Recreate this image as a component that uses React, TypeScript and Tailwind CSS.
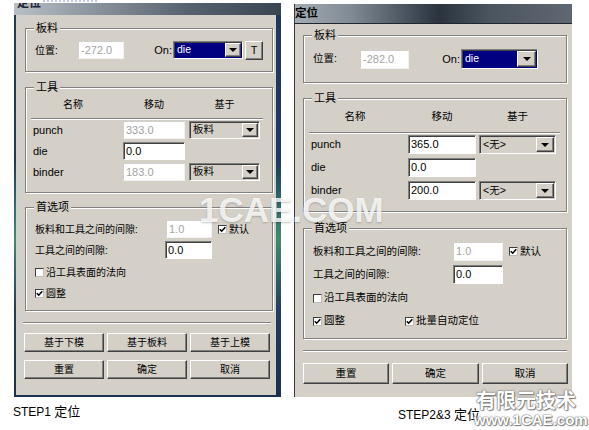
import clsx from 'clsx';
import type { ReactNode } from 'react';

const RAISED =
  'border border-t-white border-l-white border-b-[#404040] border-r-[#404040] shadow-[inset_-1px_-1px_0_#808080]';
const SUNKEN =
  'border border-t-[#808080] border-l-[#808080] border-b-white border-r-white shadow-[inset_1px_1px_0_#404040]';

function Group({ title, className, children }: { title: string; className?: string; children: ReactNode }) {
  return (
    <div className={clsx('relative border border-[#808080] shadow-[inset_1px_1px_0_#fff,1px_1px_0_#fff]', className)}>
      <span className="absolute -top-[7px] left-[8px] bg-[#d4d0c8] px-[2px] text-[11px] leading-[12px]">{title}</span>
      {children}
    </div>
  );
}

function Field({ value, disabled, className }: { value: string; disabled?: boolean; className?: string }) {
  return (
    <div
      className={clsx(
        'flex items-center bg-white pl-[2px] text-[11px] leading-none',
        disabled
          ? 'border border-[#cfcfcf] border-b-[#f2f2f2] border-r-[#f2f2f2] text-[#a3a3a3]'
          : clsx(SUNKEN, 'text-black'),
        className,
      )}
    >
      {value}
    </div>
  );
}

function Sel({ value, dark, className, arrow = 'w-[16px]' }: { value: string; dark?: boolean; className?: string; arrow?: string }) {
  return (
    <div className={clsx('flex items-stretch p-[1px]', SUNKEN, dark ? 'bg-[#000080]' : 'bg-[#d4d0c8]', className)}>
      <div className={clsx('flex flex-1 items-center pl-[2px] text-[10.5px]', dark ? 'text-white' : 'text-black')}>{value}</div>
      <div className={clsx('flex items-center justify-center bg-[#d4d0c8]', RAISED, arrow)}>
        <svg width="8" height="4" viewBox="0 0 8 4">
          <path d="M0 0H8L4 4Z" fill="#000" />
        </svg>
      </div>
    </div>
  );
}

function Btn({ children, className }: { children: ReactNode; className?: string }) {
  return <div className={clsx('flex items-center justify-center bg-[#d4d0c8] text-black', RAISED, className)}>{children}</div>;
}

function Check({ label, checked, className }: { label: string; checked?: boolean; className?: string }) {
  return (
    <div className={clsx('flex items-center', className)}>
      <span className="flex h-[9px] w-[9px] items-center justify-center border border-[#404040] border-b-[#bdbdbd] border-r-[#bdbdbd] bg-white">
        {checked && (
          <svg width="7" height="7" viewBox="0 0 7 7">
            <path d="M0.8 3.3L2.7 5.2L6.3 1.3" fill="none" stroke="#000" strokeWidth="1.6" />
          </svg>
        )}
      </span>
      <span className="ml-[2px]">{label}</span>
    </div>
  );
}

function Sep({ className }: { className?: string }) {
  return <div className={clsx('h-[2px] border-t border-b border-t-[#808080] border-b-white', className)} />;
}

function LeftDialog() {
  return (
    <div className="w-[267px] bg-[linear-gradient(180deg,#22385a_0%,#1d3a5c_40%,#2f6f72_52%,#3f8b6e_60%,#1f3d5e_78%,#1b2f4e_100%)]">
      <div className="h-[12px] overflow-hidden bg-[linear-gradient(90deg,#b9bfc5_0%,#8a949e_30%,#56626f_65%,#3a4552_100%)] pl-[3px]">
        <div className="-mt-[7px] text-[12px] font-bold leading-[14px] text-[#1c2230]">定位</div>
      </div>
      <div className="pb-[2px] pl-[2px] pr-[5px]">
        <div className="h-[380px] bg-[#d4d0c8] pt-[13px] text-[11px] text-black">
          <Group title="板料" className="ml-[9px] w-[248px] pb-[12px] pt-[12px]">
            <div className="flex h-[18px] items-center pl-[9px]">
              <span className="w-[43px] text-[10px]">位置:</span>
              <Field value="-272.0" disabled className="h-[18px] w-[46px]" />
              <span className="w-[49px] pr-[1px] text-right">On:</span>
              <Sel value="die" dark className="h-[18px] w-[70px]" />
              <Btn className="ml-[2px] h-[19px] w-[18px] text-[11px] text-[#1a1a40]">T</Btn>
            </div>
          </Group>

          <Group title="工具" className="ml-[9px] mt-[15px] w-[248px] pb-[11px] pt-[9px]">
            <div className="flex h-[14px] items-center pl-[7px] text-[10px]">
              <span className="w-[80px] text-center">名称</span>
              <span className="w-[10px]" />
              <span className="w-[62px] text-center">移动</span>
              <span className="w-[4px]" />
              <span className="w-[71px] text-center">基于</span>
            </div>
            <Sep className="ml-[5px] mt-[7px] w-[232px]" />
            <div className="mt-[1px] flex flex-col gap-[3px] pl-[7px]">
              <div className="flex h-[18px] items-center">
                <span className="w-[90px]">punch</span>
                <Field value="333.0" disabled className="h-full w-[62px]" />
                <Sel value="板料" className="ml-[4px] h-full w-[71px]" />
              </div>
              <div className="flex h-[18px] items-center">
                <span className="w-[90px]">die</span>
                <Field value="0.0" className="h-full w-[62px]" />
              </div>
              <div className="flex h-[18px] items-center">
                <span className="w-[90px]">binder</span>
                <Field value="183.0" disabled className="h-full w-[62px]" />
                <Sel value="板料" className="ml-[4px] h-full w-[71px]" />
              </div>
            </div>
          </Group>

          <Group title="首选项" className="ml-[9px] mt-[14px] w-[248px] pb-[10px] pl-[9px] pt-[12px] text-[10px]">
            <div className="flex h-[18px] items-center">
              <span className="w-[131px]">板料和工具之间的间隙:</span>
              <Field value="1.0" disabled className="h-full w-[46px]" />
              <Check label="默认" checked className="ml-[6px]" />
            </div>
            <div className="mt-[3px] flex h-[18px] items-center">
              <span className="w-[130px]">工具之间的间隙:</span>
              <Field value="0.0" className="h-full w-[47px]" />
            </div>
            <Check label="沿工具表面的法向" className="mt-[6px] h-[14px]" />
            <Check label="圆整" checked className="mt-[7px] h-[14px]" />
          </Group>

          <Sep className="ml-[7px] mt-[11px] w-[248px]" />
          <div className="ml-[8px] mt-[9px] flex gap-[3px] text-[10px]">
            <Btn className="h-[19px] w-[80px]">基于下模</Btn>
            <Btn className="h-[19px] w-[80px]">基于板料</Btn>
            <Btn className="h-[19px] w-[80px]">基于上模</Btn>
          </div>
          <div className="ml-[8px] mt-[8px] flex gap-[3px] text-[10px]">
            <Btn className="h-[19px] w-[80px]">重置</Btn>
            <Btn className="h-[19px] w-[80px]">确定</Btn>
            <Btn className="h-[19px] w-[80px]">取消</Btn>
          </div>
        </div>
      </div>
    </div>
  );
}

function RightDialog() {
  return (
    <div className="w-[278px] border-l border-l-[#3a3a3a]">
      <div className="flex h-[20px] items-center border-b border-b-[#20262c] bg-[linear-gradient(90deg,#a3abb3_0%,#818b95_20%,#3c4652_45%,#2a333e_52%,#4a545f_70%,#5f6772_100%)]">
        <span className="text-[11.5px] font-bold leading-none text-black">定位</span>
      </div>
      <div className="h-[373px] bg-[#d4d0c8] pt-[11px] text-[11px] text-black">
        <Group title="板料" className="ml-[8px] w-[264px] pb-[13px] pt-[13px]">
          <div className="flex h-[20px] items-center pl-[9px]">
            <span className="w-[47px] text-[10.5px]">位置:</span>
            <Field value="-282.0" disabled className="h-[19px] w-[49px]" />
            <span className="w-[52px] pr-[1px] text-right">On:</span>
            <Sel value="die" dark className="h-[20px] w-[77px]" arrow="w-[19px]" />
          </div>
        </Group>

        <Group title="工具" className="ml-[8px] mt-[15px] w-[264px] pb-[11px] pt-[11px]">
          <div className="flex h-[14px] items-center pl-[7px] text-[10.5px]">
            <span className="w-[88px] text-center">名称</span>
            <span className="w-[9px]" />
            <span className="w-[68px] text-center">移动</span>
            <span className="w-[3px]" />
            <span className="w-[77px] text-center">基于</span>
          </div>
          <Sep className="ml-[5px] mt-[8px] w-[251px]" />
          <div className="mt-[1px] flex flex-col gap-[4px] pl-[7px]">
            <div className="flex h-[19px] items-center">
              <span className="w-[97px]">punch</span>
              <Field value="365.0" className="h-full w-[68px]" />
              <Sel value="<无>" className="ml-[3px] h-full w-[77px]" arrow="w-[18px]" />
            </div>
            <div className="flex h-[19px] items-center">
              <span className="w-[97px]">die</span>
              <Field value="0.0" className="h-full w-[68px]" />
            </div>
            <div className="flex h-[19px] items-center">
              <span className="w-[97px]">binder</span>
              <Field value="200.0" className="h-full w-[68px]" />
              <Sel value="<无>" className="ml-[3px] h-full w-[77px]" arrow="w-[18px]" />
            </div>
          </div>
        </Group>

        <Group title="首选项" className="ml-[8px] mt-[16px] w-[264px] pb-[10px] pl-[9px] pt-[13px] text-[10.5px]">
          <div className="flex h-[19px] items-center">
            <span className="w-[140px]">板料和工具之间的间隙:</span>
            <Field value="1.0" disabled className="h-full w-[50px]" />
            <Check label="默认" checked className="ml-[6px]" />
          </div>
          <div className="mt-[4px] flex h-[19px] items-center">
            <span className="w-[140px]">工具之间的间隙:</span>
            <Field value="0.0" className="h-full w-[50px]" />
          </div>
          <Check label="沿工具表面的法向" className="mt-[7px] h-[14px]" />
          <div className="mt-[9px] flex h-[14px] items-center">
            <Check label="圆整" checked className="w-[92px]" />
            <Check label="批量自动定位" checked />
          </div>
        </Group>

        <Sep className="ml-[8px] mt-[11px] w-[264px]" />
        <div className="ml-[8px] mt-[11px] flex gap-[3px] text-[10.5px]">
          <Btn className="h-[21px] w-[86px]">重置</Btn>
          <Btn className="h-[21px] w-[87px]">确定</Btn>
          <Btn className="h-[21px] w-[86px]">取消</Btn>
        </div>
      </div>
    </div>
  );
}

export default function App() {
  return (
    <div className="relative h-[430px] w-[589px] overflow-hidden bg-white font-['Liberation_Sans','Noto_Sans_CJK_SC',sans-serif]">
      <div className="flex items-start">
        <div className="ml-[14px] w-[267px]">
          <div className="ml-[29px] h-0 w-[54px] border-t-2 border-dotted border-t-[#c4c4ee]" />
          <div className="mt-[1px]">
            <LeftDialog />
          </div>
          <div className="-ml-[1px] mt-[7px] text-[12px] leading-[16px] text-black">
            STEP1 <span className="text-[13px]">定位</span>
          </div>
        </div>
        <div className="ml-[13px] mt-[4px] w-[278px]">
          <RightDialog />
          <div className="ml-[104px] mt-[10px] text-[12px] leading-[16px] text-black">
            STEP2&amp;3 <span className="text-[13px]">定位</span>
          </div>
        </div>
      </div>

      {/* watermarks */}
      <div className="pointer-events-none absolute left-[199px] top-[192px] font-['Liberation_Sans',sans-serif] text-[35px] font-bold leading-none text-white/80 [text-shadow:0_1px_2px_rgba(0,0,0,0.22)]">
        1CAE.COM
      </div>
      <div className="pointer-events-none absolute left-[476px] top-[390px] text-[20px] font-bold leading-[22px] text-white [text-shadow:0_0_1px_#555,0_0_2px_#777,1px_1px_1px_#888]">
        有限元技术
      </div>
      <div className="pointer-events-none absolute left-[474px] top-[411px] font-['Liberation_Sans',sans-serif] text-[15px] font-bold leading-[17px] text-white [text-shadow:0_0_1px_#555,0_0_2px_#777,1px_1px_1px_#888]">
        www.1CAE.com
      </div>
    </div>
  );
}
